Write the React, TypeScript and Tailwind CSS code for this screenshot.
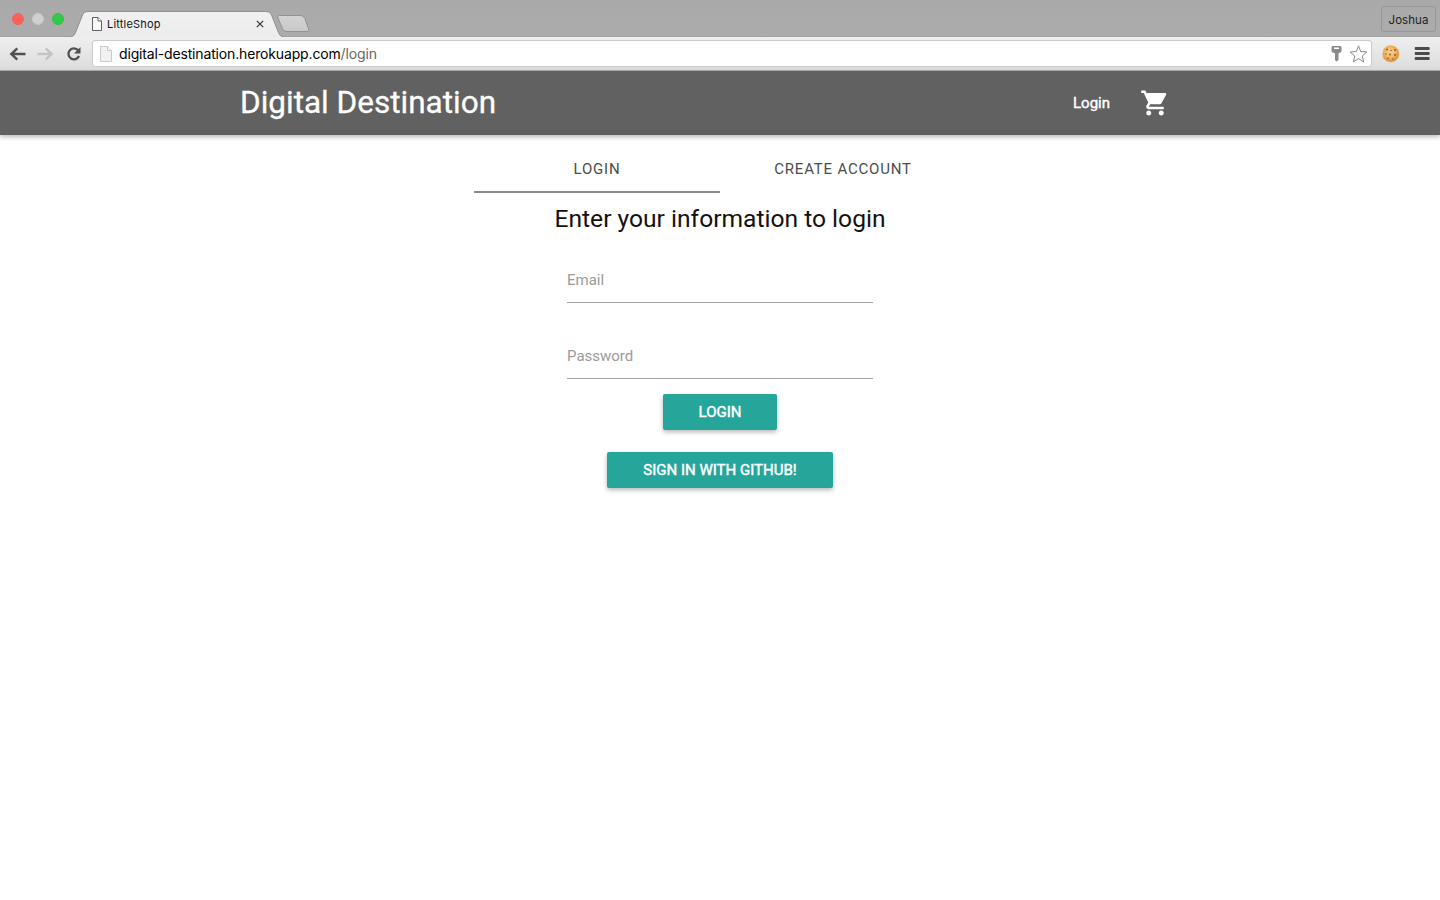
import React from "react";

function TrafficLights() {
  return (
    <div className="flex h-[38px] items-center gap-[8px] pl-[12px]">
      <span className="size-[12px] rounded-full border border-[#f5605b] bg-[#fc605b]" />
      <span className="size-[12px] rounded-full border border-[#c8c8c8] bg-[#d0d0d0]" />
      <span className="size-[12px] rounded-full border border-[#2fc143] bg-[#34c84a]" />
    </div>
  );
}

function BrowserTab() {
  return (
    <div className="relative ml-[7px] h-[37px] w-[214px] shrink-0">
      <svg className="absolute inset-0" width="214" height="37" viewBox="0 0 214 37" fill="none">
        <defs>
          <linearGradient id="tab" x1="0" y1="12" x2="0" y2="37" gradientUnits="userSpaceOnUse">
            <stop stopColor="#f1f1f1" />
            <stop offset="1" stopColor="#ececec" />
          </linearGradient>
        </defs>
        <path d="M0 37C2.500 36.500 3.500 35.500 4.500 33L11.500 15.500C12.700 12.800 14 12 17 12H195C198 12 199.500 13 200.500 15.500L207.500 33C208.500 35.500 209.500 36.500 212 37Z" fill="url(#tab)" />
        <path d="M0 36.500C2.500 36 3.500 35 4.500 32.500L11.500 15C12.700 12.300 14 11.500 17 11.500H195C198 11.500 199.500 12.500 200.500 15L207.500 32.500C208.500 35 209.500 36 212 36.500" stroke="#929292" strokeWidth="1" />
      </svg>
      <div className="relative flex h-full items-center pt-[11px] pl-[21px]">
        <svg width="10" height="14" viewBox="0 0 10 14" fill="#fafafa" stroke="#606060">
          <path d="M.5.500H6L9.500 4V13.500H.5Z" />
          <path d="M6 .5V4H9.500" />
        </svg>
        <span className="ml-[5px] w-[149px] font-['Inter',sans-serif] text-[11px] leading-[14px] tracking-[0.180px] text-[#141414]">LittleShop</span>
        <svg width="8" height="8" viewBox="0 0 8 8" stroke="#333" strokeWidth="1.200">
          <path d="M.8.800 7.200 7.200M7.200.800.800 7.200" />
        </svg>
      </div>
    </div>
  );
}

function TabStrip() {
  return (
    <div className="flex h-[37px] bg-gradient-to-b from-[#a9a9a9] to-[#acacac] shadow-[inset_0_-1px_0_#a0a0a0]">
      <TrafficLights />
      <BrowserTab />
      <svg className="-ml-[9px] mt-[14px] shrink-0" width="34" height="20" viewBox="0 0 34 20">
        <defs>
          <linearGradient id="newtab" x1="0" y1="0" x2="0" y2="1">
            <stop stopColor="#d3d3d3" />
            <stop offset="1" stopColor="#c8c8c8" />
          </linearGradient>
        </defs>
        <path d="M3.500 1.500H24C26.500 1.500 27.800 2.500 28.800 4.500L32.700 15C33.200 16.500 32.700 17.500 31.200 17.500H11C9 17.500 7.500 16.500 6.500 14.500L2 4C1.500 2.500 2 1.500 3.500 1.500Z" fill="url(#newtab)" stroke="#929292" />
      </svg>
      <div className="mt-[6px] mr-[4px] ml-auto flex h-[26px] w-[55px] items-center justify-center rounded-[3px] border border-[#979797] pt-[3px] font-['Inter',sans-serif] text-[11.500px] tracking-[0.050px] text-[#222]">
        Joshua
      </div>
    </div>
  );
}

function Toolbar() {
  return (
    <div className="flex h-[34px] items-center border-b border-[#b0b0b0] bg-gradient-to-b from-[#efefef] to-[#dcdcdc]">
      <svg className="ml-[9px]" width="17" height="14" viewBox="0 0 17 14" fill="none" stroke="#505050" strokeWidth="2.400">
        <path d="M16.500 7H2.500M8.300 1.300 2.300 7 8.300 12.700" />
      </svg>
      <svg className="ml-[11px]" width="17" height="14" viewBox="0 0 17 14" fill="none" stroke="#c3c3c3" strokeWidth="2.300">
        <path d="M.5 7H14.500M8.700 1.300 14.700 7 8.700 12.700" />
      </svg>
      <svg className="ml-[12px]" width="16" height="16" viewBox="0 0 16 16">
        <path d="M12.200 4.300A5.500 5.500 0 1 0 13 10" fill="none" stroke="#505050" strokeWidth="2.300" />
        <path d="M14.500 1V7.500H8Z" fill="#505050" />
      </svg>
      <div className="ml-[10px] flex h-[27px] w-[1280px] items-center rounded-[3px] border border-[#cbcbcb] bg-white pr-[3px] pl-[7px]">
        <svg width="12" height="16" viewBox="0 0 12 16" fill="#f1f1f1" stroke="#cacaca">
          <path d="M.5.500H7.500L11.500 4.500V15.500H.5Z" />
          <path d="M7.500.500V4.500H11.500" />
        </svg>
        <span className="ml-[7px] whitespace-pre font-['Inter',sans-serif] text-[14px] leading-[20px] tracking-[-0.155px] text-black">
          digital-destination.herokuapp.com<span className="text-[#666]">/login</span>
        </span>
        <svg className="mr-[-1px] ml-auto" width="11" height="16" viewBox="0 0 11 16" fill="#8b8b8b">
          <path fillRule="evenodd" d="M1.500 0H9.500Q10.500 0 10.500 1.500V5Q10.500 6.500 9 6.500L7.500 7.500V14L5.500 15.500 4 14V7.500L2 6.500Q.5 6.500 .5 5V1.500Q.5 0 1.500 0ZM3 1.500V3H8V1.500Z" />
        </svg>
        <svg className="ml-[8px]" width="19" height="18" viewBox="0 0 19 18" fill="white" stroke="#8a8a8a" strokeLinejoin="round">
          <path d="M9.500 .8 11.700 6.500 17.900 7 13.200 11 14.700 16.900 9.500 13.700 4.300 16.900 5.800 11 1.100 7 7.300 6.500Z" />
        </svg>
      </div>
      <svg className="ml-[10px]" width="18" height="18" viewBox="0 0 18 18">
        <defs>
          <radialGradient id="cookie" cx="45%" cy="40%">
            <stop stopColor="#fbd48d" />
            <stop offset=".65" stopColor="#f2b765" />
            <stop offset="1" stopColor="#df963e" />
          </radialGradient>
        </defs>
        <path d="M5 1.400 9 .8 13 1.800 16 4.800 17 9 16 13 13 16 9 17 4.500 16 1.500 13 .8 9 2 4Z" fill="url(#cookie)" stroke="#e8a44f" strokeWidth=".7" strokeLinejoin="round" />
        <g fill="#80502a">
          <circle cx="5" cy="4.500" r=".9" /><circle cx="9" cy="5.500" r=".7" /><circle cx="13" cy="5" r=".9" />
          <circle cx="4" cy="9" r=".7" /><circle cx="8" cy="9.500" r=".9" /><circle cx="13" cy="10" r=".9" />
          <circle cx="6" cy="13.300" r=".8" /><circle cx="11" cy="14" r=".7" />
        </g>
      </svg>
      <svg className="ml-[14px]" width="16" height="13" viewBox="0 0 16 13" fill="#4c4c4c">
        <rect x=".7" width="15" height="3" rx="1" /><rect x=".7" y="5" width="15" height="3" rx="1" /><rect x=".7" y="10" width="15" height="3" rx="1" />
      </svg>
    </div>
  );
}

function SiteNav() {
  return (
    <nav className="relative flex h-[64px] items-center bg-[#616161] px-[240px] text-white shadow-[0_2px_5px_0_rgba(0,0,0,0.16),0_2px_4px_0_rgba(0,0,0,0.12)]">
      <span className="text-[31.500px] leading-[62px] [-webkit-text-stroke:0.3px_white]">Digital Destination</span>
      <span className="ml-auto text-[15px] [-webkit-text-stroke:0.4px_white]">Login</span>
      <svg className="mr-[30px] ml-[30px]" width="30" height="30" viewBox="0 0 24 24" fill="white">
        <path d="M7 18c-1.100 0-1.990.900-1.990 2S5.900 22 7 22s2-.9 2-2-.9-2-2-2zM1 2v2h2l3.600 7.590-1.350 2.450c-.16.280-.25.610-.25.960 0 1.100.900 2 2 2h12v-2H7.420c-.14 0-.25-.11-.25-.25l.03-.12.900-1.630h7.450c.75 0 1.410-.41 1.750-1.030l3.580-6.490c.08-.14.120-.31.120-.48 0-.55-.45-1-1-1H5.210l-.94-2H1zm16 16c-1.100 0-1.990.900-1.990 2s.89 2 1.990 2 2-.9 2-2-.9-2-2-2z" />
      </svg>
    </nav>
  );
}

function Field({ label }: { label: string }) {
  return (
    <div className="flex h-[46px] w-[306px] items-start border-b border-[#a4a4a4] pt-[11px] text-[15px] leading-[24px] text-[#9b9b9b]">
      {label}
    </div>
  );
}

const buttonClass =
  "flex h-[36px] items-center justify-center rounded-[2px] bg-[#26a69a] text-[15px] text-white shadow-[0_2px_5px_0_rgba(0,0,0,0.16),0_2px_4px_0_rgba(0,0,0,0.14)] [-webkit-text-stroke:0.45px_white]";

export default function App() {
  return (
    <div className="h-[900px] w-[1440px] overflow-hidden bg-white font-['Roboto',sans-serif]">
      <TabStrip />
      <Toolbar />
      <SiteNav />
      <main className="flex flex-col items-center pt-[10px]">
        <div className="flex h-[48px] w-[492px] text-[15px] leading-[48px] tracking-[0.800px] text-[#4c4c4c]">
          <div className="w-1/2 border-b-2 border-[#8b8b8b] text-center">LOGIN</div>
          <div className="w-1/2 text-center">CREATE ACCOUNT</div>
        </div>
        <h1 className="mt-[8px] text-[24.600px] leading-[36px] text-[#111]">Enter your information to login</h1>
        <form className="mt-[20px] flex flex-col items-center">
          <Field label="Email" />
          <div className="mt-[30px]">
            <Field label="Password" />
          </div>
          <button type="button" className={`${buttonClass} mt-[15px] w-[114px]`}>LOGIN</button>
          <button type="button" className={`${buttonClass} mt-[22px] w-[226px]`}>SIGN IN WITH GITHUB!</button>
        </form>
      </main>
    </div>
  );
}
